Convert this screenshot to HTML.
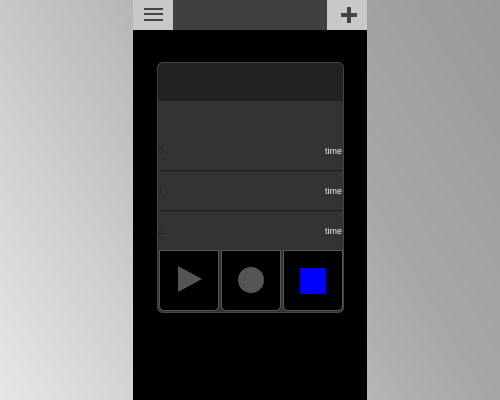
<!DOCTYPE html>
<html><head><style>
body{margin:0;width:500px;height:400px;overflow:hidden;background:linear-gradient(60deg,#e6e6e6 0%,#c4c4c4 35%,#a8a8a8 65%,#9a9a9a 100%);font-family:"Liberation Sans",sans-serif;position:relative}
.ph{position:absolute;left:133px;top:0;width:234px;height:400px;background:#000}
.hb{position:absolute;top:0;height:30px;background:#c8c8c8}
.card{position:absolute;left:157px;top:62px;width:185px;height:249px;border:1px solid #444;border-radius:6px;background:#333;overflow:hidden}
.top{height:38px;background:#222}
.row{position:absolute;left:0;width:185px;font-size:9px;color:#222}
.row span{position:absolute;right:1px;color:#eee}
.sep{position:absolute;left:1px;width:183px;height:1px;background:#1c1c1c}
.btn{position:absolute;top:187px;width:58px;height:59px;background:#000;border:1px solid #555;border-radius:0 0 5px 5px}
</style></head><body>
<div class="ph">
 <div class="hb" style="left:0;width:40px"><div style="position:absolute;left:11px;top:8px;width:19px;height:2px;background:#444;box-shadow:0 5px 0 #444,0 11px 0 #444"></div></div>
 <div style="position:absolute;left:40px;top:0;width:154px;height:30px;background:#404040"></div>
 <div class="hb" style="left:194px;width:40px"><div style="position:absolute;left:14px;top:13px;width:16px;height:4px;background:#444"></div><div style="position:absolute;left:20px;top:7px;width:4px;height:16px;background:#444"></div></div>
</div>
<div class="card">
 <div class="top"></div>
 <div class="row" style="top:83px">0<span>time</span></div>
 <div class="sep" style="top:107px"></div>
 <div class="row" style="top:123px">1<span>time</span></div>
 <div class="sep" style="top:147px"></div>
 <div class="row" style="top:163px">2<span>time</span></div>
 <div class="btn" style="left:1px"><div style="position:absolute;left:18px;top:15px;width:0;height:0;border-top:13px solid transparent;border-bottom:13px solid transparent;border-left:24px solid #555"></div></div>
 <div class="btn" style="left:63px"><div style="position:absolute;left:16px;top:16px;width:26px;height:26px;border-radius:50%;background:#555"></div></div>
 <div class="btn" style="left:125px"><div style="position:absolute;left:16px;top:17px;width:26px;height:26px;background:#00f"></div></div>
</div>
</body></html>
